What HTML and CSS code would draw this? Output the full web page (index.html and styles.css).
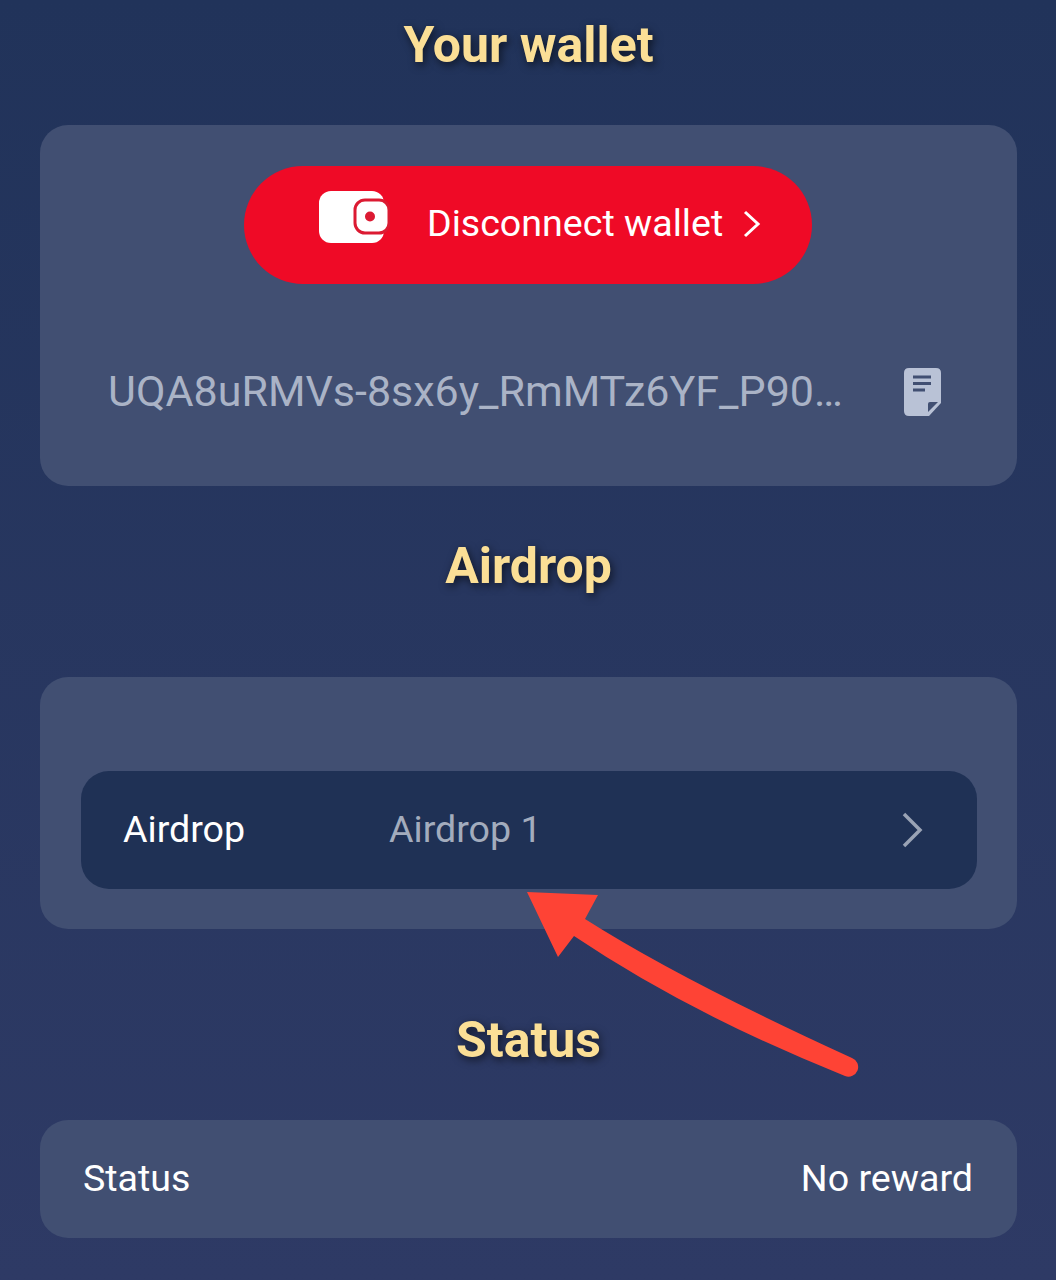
FILE: index.html
```html
<!DOCTYPE html>
<html lang="en">
  <head>
    <meta charset="UTF-8" />
    <title>Your wallet</title>
    <link rel="stylesheet" href="styles.css">
  </head>
  <body>
    <h1 class="title title-wallet">Your wallet</h1>

    <div class="card wallet-card">
      <button class="disconnect-button">
        <svg class="wallet-icon" width="72" height="54" viewBox="0 0 72 54">
          <rect x="1" y="1" width="65" height="52" rx="12" fill="#fff" />
          <rect x="37" y="10" width="34" height="33" rx="10" fill="#fff" stroke="#dc1a32" stroke-width="3" />
          <circle cx="52" cy="26.5" r="5" fill="#dc1a32" />
        </svg>
        <span class="disconnect-text">Disconnect wallet</span>
        <svg class="chevron" width="20" height="28" viewBox="0 0 20 28">
          <path d="M3 2L16 14L3 26" fill="none" stroke="#fff" stroke-width="3" />
        </svg>
      </button>

      <div class="address-row">
        <span class="address">UQA8uRMVs-8sx6y_RmMTz6YF_P90…</span>
        <svg class="copy-icon" width="37" height="48" viewBox="0 0 37 48">
          <path d="M5 0H32Q37 0 37 5V35L25 48H5Q0 48 0 43V5Q0 0 5 0Z" fill="#b9c2d6" />
          <path d="M9 9H27M9 15.5H27M9 22H21" stroke="#414f72" stroke-width="3" />
          <path d="M24 44V36Q24 34 26 34H34Z" fill="#414f72" />
        </svg>
      </div>
    </div>

    <h2 class="title title-airdrop">Airdrop</h2>

    <div class="card airdrop-card">
      <div class="airdrop-row">
        <span class="airdrop-label">Airdrop</span>
        <span class="airdrop-value">Airdrop 1</span>
        <svg class="row-chevron" width="22" height="36" viewBox="0 0 22 36">
          <path d="M3 2L19 18L3 34" fill="none" stroke="#9aa3b5" stroke-width="3.5" />
        </svg>
      </div>
    </div>

    <h2 class="title title-status">Status</h2>

    <div class="card status-card">
      <span>Status</span>
      <span>No reward</span>
    </div>

    <!-- arrow drawn over the screenshot -->
    <svg class="arrow" width="1056" height="1280" viewBox="0 0 1056 1280">
      <path d="M527 892L598 895L585 919Q681 980 852 1058A9.5 9.5 0 0 1 845 1076Q690 1014 574 936L558 957Z" fill="#fe4335" />
    </svg>
  </body>
</html>
```

FILE: styles.css
```css
* {
  box-sizing: border-box;
}

html,
body {
  margin: 0;
  height: 1280px;
  overflow: hidden;
}

body {
  position: relative;
  padding: 0 39px 0 40px;
  font-family: Roboto, 'Liberation Sans', sans-serif;
  background: linear-gradient(180deg, #21335a 0%, #2e3a65 100%);
  color: #fff;
}

.title {
  margin: 0;
  height: 60px;
  font-size: 50px;
  line-height: 60px;
  font-weight: 700;
  text-align: center;
  color: #fbdf96;
  text-shadow: 2px 3px 8px rgba(0, 0, 0, 0.6);
}

.title-wallet {
  margin-top: 15px;
  margin-bottom: 50px;
}

.title-airdrop {
  margin-top: 49px;
  margin-bottom: 82px;
  padding-top: 1px;
}

.title-status {
  margin-top: 81px;
  margin-bottom: 50px;
}

.card {
  background-color: #414f72;
  border-radius: 28px;
}

/* 지갑 카드 */
.wallet-card {
  display: flex;
  flex-direction: column;
  align-items: center;
  height: 361px;
  padding-top: 41px;
}

.disconnect-button {
  display: flex;
  align-items: center;
  width: 568px;
  height: 118px;
  margin-right: 1px;
  padding: 0 0 6px 74px;
  border: none;
  border-radius: 59px;
  background-color: #ef0a26;
  color: #fff;
  font-family: inherit;
}

.wallet-icon {
  margin-bottom: 10px;
}

.disconnect-text {
  margin-left: 37px;
  padding-top: 2px;
  font-size: 37.6px;
}

.chevron {
  margin-left: 19px;
  margin-top: 4px;
}

.address-row {
  display: flex;
  align-items: center;
  align-self: stretch;
  margin-top: 83px;
  padding: 0 76px 0 68px;
}

.address {
  flex: 1;
  min-width: 0;
  margin-bottom: 2px;
  font-size: 43px;
  line-height: 48px;
  color: #aab3c6;
  white-space: nowrap;
}

.copy-icon {
  flex: none;
  margin-left: 60px;
}

/* 에어드롭 카드 */
.airdrop-card {
  height: 252px;
  padding: 94px 40px 0 41px;
}

.airdrop-row {
  display: flex;
  align-items: center;
  height: 118px;
  padding: 0 54px 0 42px;
  border-radius: 28px;
  background-color: #1f3155;
  font-size: 37.6px;
}

.airdrop-label {
  width: 266px;
  margin-bottom: 2px;
}

.airdrop-value {
  flex: 1;
  margin-bottom: 2px;
  color: #a3acbd;
}

/* 상태 카드 */
.status-card {
  display: flex;
  justify-content: space-between;
  align-items: center;
  height: 118px;
  padding: 0 44px 2px 43px;
  font-size: 37.6px;
}

.arrow {
  position: absolute;
  left: 0;
  top: 0;
  pointer-events: none;
}
```
